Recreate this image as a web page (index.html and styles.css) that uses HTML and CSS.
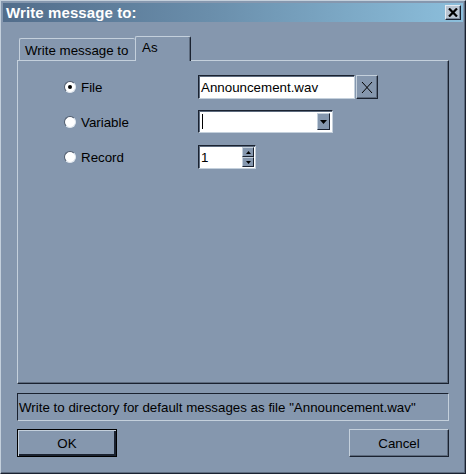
FILE: index.html
```html
<!DOCTYPE html>
<html>
<head>
<meta charset="utf-8">
<title>Write message to:</title>
<link rel="stylesheet" href="styles.css">
</head>
<body>
<div class="window">
  <div class="titlebar">
    <span class="title">Write message to:</span>
    <span class="close"><svg width="10" height="9" viewBox="0 0 10 9"><path d="M1 0.5 L9 8.5 M9 0.5 L1 8.5" stroke="#000" stroke-width="2.2" fill="none"/></svg></span>
  </div>
  <div class="content">
    <div class="tabs">
      <div class="tab">Write message to</div>
      <div class="tab active">As</div>
    </div>
    <div class="panel">
      <div class="form">
        <label class="opt"><span class="radio checked"></span>File</label>
        <div class="ctl">
          <div class="field file">Announcement.wav</div>
          <div class="xbtn"><svg width="12" height="13" viewBox="0 0 12 13"><path d="M1 1 L11 12 M11 1 L1 12" stroke="#000" stroke-width="1" fill="none"/></svg></div>
        </div>
        <label class="opt"><span class="radio"></span>Variable</label>
        <div class="ctl">
          <div class="field combo"><span class="caret"></span><span class="dd"><svg width="7" height="4" viewBox="0 0 7 4"><path d="M0 0 H7 L3.5 4 Z" fill="#000"/></svg></span></div>
        </div>
        <label class="opt"><span class="radio"></span>Record</label>
        <div class="ctl">
          <div class="field spin"><span class="val">1</span><span class="arrows"><span class="sb"><svg width="5" height="3" viewBox="0 0 5 3"><path d="M2.5 0 L5 3 H0 Z" fill="#000"/></svg></span><span class="sb"><svg width="5" height="3" viewBox="0 0 5 3"><path d="M0 0 H5 L2.5 3 Z" fill="#000"/></svg></span></span></div>
        </div>
      </div>
    </div>
    <div class="status">Write to directory for default messages as file "Announcement.wav"</div>
    <div class="buttons">
      <div class="btn default">OK</div>
      <div class="btn">Cancel</div>
    </div>
  </div>
</div>
</body>
</html>
```

FILE: styles.css
```css
html, body {
  margin: 0;
  padding: 0;
  background: #8597ae;
}
.window {
  width: 466px;
  height: 474px;
  box-sizing: border-box;
  background: #8597ae;
  border: 1px solid;
  border-color: #c4d0dc #1a2230 #1a2230 #c4d0dc;
  box-shadow: inset -1px -1px 0 #5d6b7e;
  padding: 2px;
  display: flex;
  flex-direction: column;
  font-family: "Liberation Sans", Arial, sans-serif;
  font-size: 13.33px;
  color: #000;
}
.titlebar {
  height: 19px;
  background: linear-gradient(to right, #526d8b 0%, #6a8eab 45%, #8cbfdc 100%);
  display: flex;
  align-items: center;
  justify-content: space-between;
  padding: 0 2px 0 3px;
}
.title {
  color: #fff;
  font-weight: bold;
  font-size: 15px;
  letter-spacing: 0.1px;
}
.close {
  width: 16px;
  height: 15px;
  box-sizing: border-box;
  background: #b9c5d2;
  border: 1px solid;
  border-color: #e4ebf2 #1a2230 #1a2230 #e4ebf2;
  box-shadow: inset -1px -1px 0 #7d8a9b;
  display: flex;
  align-items: center;
  justify-content: center;
}
.content {
  flex: 1;
  display: flex;
  flex-direction: column;
  padding: 14px 14px 0 14px;
}
.tabs {
  display: flex;
  align-items: flex-end;
  height: 25px;
  padding-left: 2px;
  position: relative;
  z-index: 1;
  margin-bottom: -1px;
}
.tab {
  box-sizing: border-box;
  height: 22px;
  width: 116px;
  border-top: 1px solid #c4d0dc;
  border-left: 1px solid #c4d0dc;
  border-radius: 2px 2px 0 0;
  padding: 4px 0 0 5px;
  margin-bottom: 1px;
  background: #8597ae;
}
.tab.active {
  height: 25px;
  width: 56px;
  margin-bottom: 0;
  padding: 3px 0 0 6px;
  border-right: 1px solid #1a2230;
  box-shadow: inset -1px 0 0 #5d6b7e;
}
.panel {
  height: 324px;
  box-sizing: border-box;
  border: 1px solid;
  border-color: #c4d0dc #1a2230 #1a2230 #c4d0dc;
  box-shadow: inset -1px -1px 0 #5d6b7e;
}
.form {
  display: grid;
  grid-template-columns: 134px auto;
  grid-auto-rows: 24px;
  row-gap: 11px;
  padding: 14px 0 0 46px;
}
.opt {
  display: flex;
  align-items: center;
  gap: 5px;
}
.radio {
  width: 12px;
  height: 12px;
  box-sizing: border-box;
  border-radius: 50%;
  background: #fff;
  border: 1px solid;
  border-color: #4e5a6c #dfe6ee #dfe6ee #4e5a6c;
  display: flex;
  align-items: center;
  justify-content: center;
}
.radio.checked::after {
  content: "";
  width: 4px;
  height: 4px;
  border-radius: 50%;
  background: #000;
}
.ctl {
  display: flex;
  align-items: stretch;
}
.field {
  box-sizing: border-box;
  background: #fff;
  border: 1px solid;
  border-color: #1a2230 #c4d0dc #c4d0dc #1a2230;
  box-shadow: inset 1px 1px 0 #5d6b7e;
  display: flex;
  align-items: center;
}
.file {
  width: 157px;
  padding-left: 2px;
}
.xbtn {
  width: 22px;
  margin-left: 1px;
  box-sizing: border-box;
  border: 1px solid;
  border-color: #c4d0dc #1a2230 #1a2230 #c4d0dc;
  box-shadow: inset -1px -1px 0 #5d6b7e;
  display: flex;
  align-items: center;
  justify-content: center;
}
.combo {
  width: 135px;
  height: 23px;
  padding: 0 2px 0 3px;
  justify-content: space-between;
}
.caret {
  width: 1px;
  height: 15px;
  background: #000;
}
.dd {
  width: 13px;
  height: 17px;
  box-sizing: border-box;
  background: #8597ae;
  border: 1px solid;
  border-color: #c4d0dc #1a2230 #1a2230 #c4d0dc;
  display: flex;
  align-items: center;
  justify-content: center;
}
.spin {
  width: 58px;
  padding-left: 2px;
  justify-content: space-between;
}
.arrows {
  display: flex;
  flex-direction: column;
  align-self: stretch;
  width: 12px;
  margin: 1px 1px 1px 0;
}
.sb {
  flex: 1;
  box-sizing: border-box;
  background: #8597ae;
  border: 1px solid;
  border-color: #c4d0dc #1a2230 #1a2230 #c4d0dc;
  display: flex;
  align-items: center;
  justify-content: center;
}
.status {
  margin-top: 9px;
  height: 28px;
  box-sizing: border-box;
  border: 1px solid;
  border-color: #1a2230 #c4d0dc #c4d0dc #1a2230;
  padding-left: 1px;
  display: flex;
  align-items: center;
}
.buttons {
  margin-top: 8px;
  display: flex;
  justify-content: space-between;
}
.btn {
  width: 100px;
  height: 28px;
  box-sizing: border-box;
  border: 1px solid;
  border-color: #c4d0dc #1a2230 #1a2230 #c4d0dc;
  box-shadow: inset -1px -1px 0 #5d6b7e;
  display: flex;
  align-items: center;
  justify-content: center;
}
.btn.default {
  border: 1px solid #000;
  box-shadow: inset 1px 1px 0 #c4d0dc, inset -2px -2px 0 #1a2230;
}
```
